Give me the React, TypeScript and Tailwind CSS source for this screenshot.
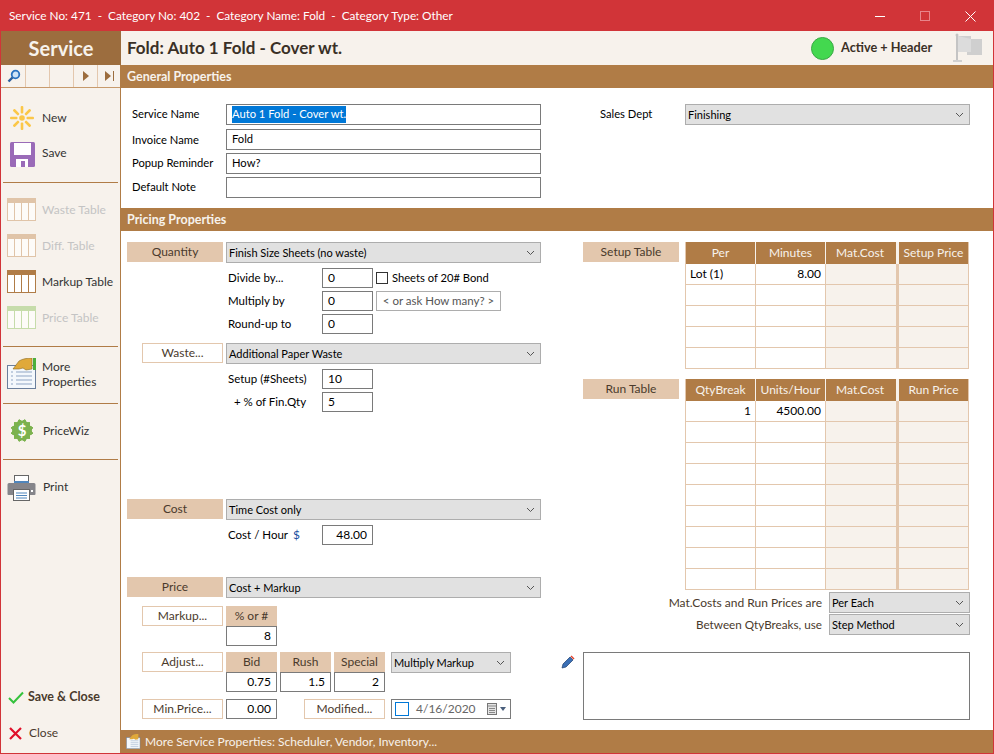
import React from "react";

const font = { fontFamily: 'Lato, sans-serif' };

function Chevron({ className = "" }: { className?: string }) {
  return (
    <svg width="9" height="6" viewBox="0 0 9 6" className={className}>
      <path d="M1 1l3.500 3.500L8 1" fill="none" stroke="#555" strokeWidth="1" />
    </svg>
  );
}

function Select({ text, className = "" }: { text: string; className?: string }) {
  return (
    <div className={`h-[21px] shrink-0 flex items-center justify-between bg-[#e1e1e1] border border-[#adadad] pl-[2px] pr-[5px] text-[11px] text-black ${className}`}>
      <span className="pt-[2px]">{text}</span>
      <Chevron />
    </div>
  );
}

function Box({ text = "", right = false, className = "" }: { text?: string; right?: boolean; className?: string }) {
  return (
    <div className={`h-[20px] shrink-0 flex items-center border border-[#7a7a7a] bg-white text-[12px] text-black px-[5px] ${right ? "justify-end" : ""} ${className}`}>
      {text}
    </div>
  );
}

function Tag({ text, className = "" }: { text: string; className?: string }) {
  return (
    <div className={`h-[20px] shrink-0 flex items-center justify-center bg-[#e3c7ad] text-[#4a3a2c] text-[12px] ${className}`}>{text}</div>
  );
}

function Btn({ text, className = "" }: { text: string; className?: string }) {
  return (
    <div className={`h-[20px] shrink-0 flex items-center justify-center border border-[#e3c7ad] bg-white text-[#4a3a2c] text-[12px] ${className}`}>{text}</div>
  );
}

function Band({ text }: { text: string }) {
  return (
    <div className="h-[23px] shrink-0 bg-[#b07c46] flex items-center pl-[6px] pt-[2px] text-[12.500px] font-bold text-[#f7f2ec]">{text}</div>
  );
}

function GridIcon({ head, line, fill }: { head: string; line: string; fill: string }) {
  return (
    <svg width="29" height="23" viewBox="0 0 29 23" className="shrink-0">
      <rect x="0.500" y="0.500" width="28" height="22" fill={fill} stroke={line} />
      <rect x="0" y="0" width="29" height="5" fill={head} />
      <path d="M7.500 5v18M14.500 5v18M21.500 5v18" stroke={line} strokeWidth="1" />
    </svg>
  );
}

function TableItem({ text, head, line, fill, color, className = "" }: { text: string; head: string; line: string; fill: string; color: string; className?: string }) {
  return (
    <div className={`flex items-center h-[23px] pl-[6px] ${className}`}>
      <GridIcon head={head} line={line} fill={fill} />
      <span className={`ml-[6px] text-[12px] whitespace-nowrap ${color}`}>{text}</span>
    </div>
  );
}

function Divider({ className = "" }: { className?: string }) {
  return <div className={`h-px mx-[2px] shrink-0 bg-[#b07c46] ${className}`} />;
}

function SunIcon() {
  const rays = [0, 45, 90, 135, 180, 225, 270, 315];
  return (
    <svg width="26" height="26" viewBox="0 0 26 26" className="shrink-0">
      {rays.map((r) => (
        <rect key={r} x="11.700" y="1" width="2.600" height="7.500" rx="1" fill="#fbc748" transform={`rotate(${r} 13 13)`} />
      ))}
      <circle cx="13" cy="13" r="2.800" fill="#fbc748" />
    </svg>
  );
}

function SaveIcon() {
  return (
    <svg width="25" height="25" viewBox="0 0 25 25" className="shrink-0">
      <rect x="0" y="0" width="25" height="25" rx="1.500" fill="#9a6bb8" />
      <rect x="4" y="1" width="17" height="12" fill="#fff" />
      <rect x="6" y="17" width="12" height="8" fill="#fff" />
      <rect x="11" y="19" width="4" height="6" fill="#9a6bb8" />
    </svg>
  );
}

function MoreIcon() {
  return (
    <svg width="30" height="31" viewBox="0 0 30 31" className="shrink-0">
      <rect x="0.500" y="7.500" width="28" height="23" fill="#f4f8fc" stroke="#6b7f9c" />
      <path d="M4 14h2M4 18h2M4 22h2M4 26h2M9 14h16M9 18h16M9 22h16M9 26h16" stroke="#8fa5c4" />
      <path d="M6 11L12 3c3-2 8-3 13-3v11l-6 1-3-2-4 1z" fill="#e0a93a" stroke="#8a6a20" strokeWidth="0.600" />
      <rect x="26" y="0" width="3" height="12" fill="#4caf3c" />
    </svg>
  );
}

function WizIcon() {
  const n = Array.from({ length: 12 }, (_, i) => i * 30);
  return (
    <svg width="26" height="27" viewBox="0 0 26 27" className="shrink-0">
      {n.map((r) => (
        <rect key={r} x="5" y="5.500" width="16" height="16" fill="#7cb24f" transform={`rotate(${r} 13 13.500)`} />
      ))}
      <circle cx="13" cy="13.500" r="8" fill="#7cb24f" />
      <text x="13" y="19" textAnchor="middle" fontSize="15" fontWeight="700" fill="#fff" style={font}>$</text>
    </svg>
  );
}

function PrintIcon() {
  return (
    <svg width="29" height="26" viewBox="0 0 29 26" className="shrink-0">
      <rect x="7.500" y="0.500" width="14" height="9" fill="#fff" stroke="#666" />
      <rect x="7" y="6" width="15" height="3" fill="#4f86bd" />
      <path d="M2 8h25a1.500 1.500 0 0 1 1.500 1.500V19a1 1 0 0 1-1 1H23v-5H6v5H1.500a1 1 0 0 1-1-1V9.500A1.500 1.500 0 0 1 2 8z" fill="#85858a" />
      <rect x="6.500" y="14.500" width="16" height="11" fill="#fff" stroke="#666" />
      <path d="M9 18h11M9 20.500h11M9 23h11" stroke="#4f86bd" />
      <rect x="24" y="15" width="2" height="2" fill="#fff" />
    </svg>
  );
}

function TableGrid({ headers, rows, data, firstRight }: { headers: string[]; rows: number; data: [string, string]; firstRight?: boolean }) {
  return (
    <div className="w-[284px] border-x border-[#e3c7ad] shrink-0">
      <div className="h-[22px] flex bg-[#b07c46] text-[#f7f2ec] text-[12px]">
        <div className="w-[70px] flex items-center justify-center border-r border-[#f7f2ec]">{headers[0]}</div>
        <div className="w-[70px] flex items-center justify-center border-r border-[#f7f2ec]">{headers[1]}</div>
        <div className="w-[73px] pr-[2px] flex items-center justify-center border-r-[3px] border-[#f7f2ec]">{headers[2]}</div>
        <div className="flex-1 flex items-center justify-center whitespace-nowrap">{headers[3]}</div>
      </div>
      {Array.from({ length: rows }, (_, i) => (
        <div key={i} className="h-[21px] flex text-[12px] text-black border-b border-[#e3c7ad]">
          <div className={`w-[70px] flex items-center px-[4px] border-r border-[#e3c7ad] bg-white ${firstRight ? "justify-end" : ""}`}>{i === 0 ? data[0] : ""}</div>
          <div className="w-[70px] flex items-center justify-end px-[4px] border-r border-[#e3c7ad] bg-white">{i === 0 ? data[1] : ""}</div>
          <div className="w-[73px] border-r-[3px] border-[#e3c7ad] bg-[#f7f2ec]" />
          <div className="flex-1 bg-[#f7f2ec]" />
        </div>
      ))}
    </div>
  );
}

function SubRow({ label, value, className = "", children }: { label: string; value: string; className?: string; children?: React.ReactNode }) {
  return (
    <div className={`flex items-center h-[20px] pl-[101px] ${className}`}>
      <span className="w-[94px] text-[11.500px] text-black whitespace-pre">{label}</span>
      <Box text={value} className="w-[51px]" />
      {children}
    </div>
  );
}

export default function App() {
  return (
    <div style={font} className="w-[994px] h-[754px] flex flex-col overflow-hidden bg-white border border-[#d13438]">
      {/* title bar */}
      <div className="h-[30px] shrink-0 bg-[#d13438] flex items-center pl-[8px] text-white text-[11.800px]">
        <span className="whitespace-pre">{"Service No: 471  -  Category No: 402  -  Category Name: Fold  -  Category Type: Other"}</span>
        <div className="ml-auto flex items-center">
          <div className="w-[10px] h-px bg-white mr-[35px]" />
          <div className="w-[10px] h-[10px] border border-[#e8848a] mr-[35px]" />
          <svg width="11" height="11" viewBox="0 0 11 11" className="mr-[17px]"><path d="M.5.5l10 10M10.500.5l-10 10" stroke="#fff" /></svg>
        </div>
      </div>

      <div className="flex-1 flex min-h-0">
        {/* sidebar */}
        <div className="w-[120px] shrink-0 bg-[#f7f2ec] border-r border-[#b07c46] flex flex-col">
          <div className="h-[34px] shrink-0 bg-[#9c6d3e] -mr-px flex items-center justify-center text-[#f7f2ec] text-[20px] font-bold">Service</div>
          <div className="h-[23px] shrink-0 flex pl-px border-b border-[#c79a6c]">
            <div className="w-[24px] flex items-center justify-center border-r border-[#e3c7ad]">
              <svg width="14" height="14" viewBox="0 0 14 14"><circle cx="8.500" cy="5.500" r="3.800" fill="#cfe4f7" stroke="#2a72c0" strokeWidth="1.800" /><path d="M5.500 8.500L1.500 12.500" stroke="#2a5f9c" strokeWidth="2.400" /></svg>
            </div>
            <div className="w-[24px] border-r border-[#e3c7ad]" />
            <div className="w-[24px] border-r border-[#e3c7ad]" />
            <div className="w-[24px] flex items-center justify-center border-r border-[#e3c7ad]">
              <svg width="6" height="10" viewBox="0 0 6 10"><path d="M0 0l6 5-6 5z" fill="#9c6d3e" /></svg>
            </div>
            <div className="flex-1 flex items-center justify-center">
              <svg width="9" height="10" viewBox="0 0 9 10"><path d="M0 0l6 5-6 5z" fill="#9c6d3e" /><rect x="8" width="1" height="10" fill="#9c6d3e" /></svg>
            </div>
          </div>

          <div className="flex items-center h-[26px] mt-[17px] pl-[8px]">
            <SunIcon />
            <span className="ml-[7px] -mt-px text-[12px] text-[#333]">New</span>
          </div>
          <div className="flex items-center h-[25px] mt-[11px] pl-[9px]">
            <SaveIcon />
            <span className="ml-[7px] -mt-[3px] text-[12px] text-[#333]">Save</span>
          </div>
          <Divider className="mt-[15px]" />

          <TableItem className="mt-[15px]" text="Waste Table" head="#e0c4a8" line="#e0c4a8" fill="#fdfbf8" color="text-[#c4c4c4]" />
          <TableItem className="mt-[13px]" text="Diff. Table" head="#e0c4a8" line="#e0c4a8" fill="#fdfbf8" color="text-[#c4c4c4]" />
          <TableItem className="mt-[13px]" text="Markup Table" head="#b07c46" line="#b07c46" fill="#ffffff" color="text-[#333]" />
          <TableItem className="mt-[13px]" text="Price Table" head="#c6dcaa" line="#c6dcaa" fill="#fdfbf8" color="text-[#c4c4c4]" />
          <Divider className="mt-[17px]" />

          <div className="flex items-center h-[31px] mt-[11px] pl-[6px]">
            <MoreIcon />
            <span className="ml-[5px] text-[12px] leading-[15px] text-[#333]">More<br />Properties</span>
          </div>
          <Divider className="mt-[14px]" />

          <div className="flex items-center h-[27px] mt-[13px] pl-[8px]">
            <WizIcon />
            <span className="ml-[8px] text-[12px] text-[#333]">PriceWiz</span>
          </div>
          <Divider className="mt-[15px]" />

          <div className="flex items-center h-[26px] mt-[15px] pl-[6px]">
            <PrintIcon />
            <span className="ml-[7px] -mt-[3px] text-[12px] text-[#333]">Print</span>
          </div>

          <div className="mt-auto flex items-center h-[20px] pl-[7px]">
            <svg width="16" height="13" viewBox="0 0 16 13"><path d="M1 7l4.500 4.500L15 1.500" fill="none" stroke="#35c23c" strokeWidth="2" /></svg>
            <span className="ml-[4px] text-[12.500px] font-bold text-[#4a3a2c]">Save &amp; Close</span>
          </div>
          <div className="flex items-center h-[20px] mt-[16px] mb-[10px] pl-[8px]">
            <svg width="13" height="13" viewBox="0 0 13 13"><path d="M1 1l11 11M12 1L1 12" stroke="#e0102a" strokeWidth="2.200" /></svg>
            <span className="ml-[7px] text-[12px] text-[#4a3a2c]">Close</span>
          </div>
        </div>

        {/* main */}
        <div className="flex-1 flex flex-col min-w-0">
          <div className="h-[34px] shrink-0 bg-[#f7f2ec] flex items-center pl-[6px] pr-[10px]">
            <span className="text-[17px] font-bold text-[#3a3026]">Fold: Auto 1 Fold - Cover wt.</span>
            <div className="ml-auto w-[23px] h-[23px] rounded-full bg-[#43d84f] border border-[#3aa845]" />
            <span className="ml-[7px] w-[92px] whitespace-nowrap text-[12.700px] font-bold text-[#3a3026]">Active + Header</span>
            <svg width="30" height="32" viewBox="0 0 30 32" className="ml-[20px]">
              <rect x="3" y="2" width="2" height="26" fill="#c4c4c4" />
              <rect x="0" y="28" width="9" height="2" fill="#d0d0d0" />
              <circle cx="4" cy="3" r="1.500" fill="#c4c4c4" />
              <path d="M5 4h13v3h11v16H14v-3H5z" fill="#cfcfcf" />
              <path d="M5 4l13 3v13H5z" fill="#dcdcdc" />
            </svg>
          </div>

          <Band text="General Properties" />
          <div className="h-[120px] shrink-0 flex pl-[11px] pt-[16px]">
            <div className="w-[409px] text-[11.200px] text-black">
              {[
                ["Service Name", "Auto 1 Fold - Cover wt.", true],
                ["Invoice Name", "Fold", false],
                ["Popup Reminder", "How?", false],
                ["Default Note", "", false],
              ].map(([label, val, sel], i) => (
                <div key={i} className={`flex items-center h-[21px] ${i === 0 ? "" : i === 1 ? "mt-[4px]" : "mt-[3px]"}`}>
                  <span className={`w-[94px] whitespace-nowrap ${i === 1 ? "pt-px" : "-mt-px"}`}>{label as string}</span>
                  <div className="w-[315px] h-[21px] border border-[#7a7a7a] bg-white flex items-center px-[5px]">
                    {sel ? <span className="bg-[#0078d7] text-white">{val as string}</span> : (val as string)}
                  </div>
                </div>
              ))}
            </div>
            <div className="ml-[59px] h-[21px] flex items-center text-[11.200px] text-black">
              <span className="w-[85px]">Sales Dept</span>
              <Select text="Finishing" className="w-[285px]" />
            </div>
          </div>

          <Band text="Pricing Properties" />
          <div className="flex-1 flex pl-[6px] pt-[11px] min-h-0">
            {/* left */}
            <div className="w-[414px] shrink-0 flex flex-col">
              <div className="flex gap-[3px]">
                <Tag text="Quantity" className="w-[96px]" />
                <Select text="Finish Size Sheets (no waste)" className="w-[315px]" />
              </div>
              <SubRow className="mt-[5px]" label="Divide by..." value="0">
                <div className="ml-[3px] w-[12px] h-[12px] border border-[#333] bg-white" />
                <span className="ml-[4px] text-[11.200px] text-black">Sheets of 20# Bond</span>
              </SubRow>
              <SubRow className="mt-[3px]" label="Multiply by" value="0">
                <div className="ml-[3px] w-[125px] h-[20px] border border-[#adadad] flex items-center justify-center text-[11.500px] text-[#555]">{"< or ask How many? >"}</div>
              </SubRow>
              <SubRow className="mt-[3px]" label="Round-up to" value="0" />
              <div className="flex gap-[3px] mt-[9px]">
                <Btn text="Waste..." className="w-[81px] ml-[15px]" />
                <Select text="Additional Paper Waste" className="w-[315px]" />
              </div>
              <SubRow className="mt-[5px]" label="Setup (#Sheets)" value="10" />
              <SubRow className="mt-[3px]" label="  + % of Fin.Qty" value="5" />

              <div className="flex gap-[3px] mt-[87px]">
                <Tag text="Cost" className="w-[96px]" />
                <Select text="Time Cost only" className="w-[315px]" />
              </div>
              <div className="flex items-center h-[20px] pl-[101px] mt-[5px]">
                <span className="w-[65px] text-[11.500px] text-black">Cost / Hour</span>
                <span className="w-[29px] text-[12px] text-[#1a4fa0]">$</span>
                <Box text="48.00" right className="w-[51px]" />
              </div>

              <div className="flex gap-[3px] mt-[32px]">
                <Tag text="Price" className="w-[96px]" />
                <Select text="Cost + Markup" className="w-[315px]" />
              </div>
              <div className="flex gap-[3px] mt-[8px]">
                <Btn text="Markup..." className="w-[81px] ml-[15px]" />
                <div className="w-[51px] shrink-0">
                  <Tag text="% or #" />
                  <Box text="8" right />
                </div>
              </div>
              <div className="flex gap-[3px] mt-[6px]">
                <Btn text="Adjust..." className="w-[81px] ml-[15px]" />
                <div className="w-[51px] shrink-0">
                  <Tag text="Bid" />
                  <Box text="0.75" right />
                </div>
                <div className="w-[51px] shrink-0">
                  <Tag text="Rush" />
                  <Box text="1.5" right />
                </div>
                <div className="w-[51px] shrink-0">
                  <Tag text="Special" />
                  <Box text="2" right />
                </div>
                <Select text="Multiply Markup" className="w-[120px] ml-[3px]" />
                <svg width="14" height="14" viewBox="0 0 14 14" className="ml-[47px] mt-[3px] shrink-0">
                  <path d="M1 13l1-4 7-7 3 3-7 7z" fill="#3a6fb5" stroke="#1e3f6e" strokeWidth="0.700" />
                  <path d="M9.500 1.500l1-1 3 3-1 1z" fill="#e0402a" />
                </svg>
              </div>
              <div className="flex mt-[7px]">
                <Btn text="Min.Price..." className="w-[81px] ml-[15px]" />
                <Box text="0.00" right className="w-[51px] ml-[3px]" />
                <Btn text="Modified..." className="w-[81px] ml-[27px]" />
                <div className="w-[120px] h-[20px] ml-[6px] border border-[#7a7a7a] flex items-center pl-[3px] pr-[3px] text-[12px] text-[#666]">
                  <div className="w-[14px] h-[14px] border border-[#0078d7]" />
                  <span className="ml-[7px]">4/16/2020</span>
                  <svg width="20" height="12" viewBox="0 0 20 12" className="ml-auto">
                    <rect x="0.500" y="0.500" width="9" height="11" fill="#e4e4e4" stroke="#777" />
                    <path d="M1 3h8M2 5.500h6M2 7.500h6M2 9.500h6" stroke="#888" />
                    <path d="M13 4h6l-3 4z" fill="#4a5f7c" />
                  </svg>
                </div>
              </div>
            </div>

            {/* right */}
            <div className="ml-[42px] w-[387px] flex flex-col">
              <div className="flex gap-[6px]">
                <Tag text="Setup Table" className="w-[96px]" />
                <TableGrid headers={["Per", "Minutes", "Mat.Cost", "Setup Price"]} rows={5} data={["Lot (1)", "8.00"]} />
              </div>
              <div className="flex gap-[6px] mt-[10px]">
                <Tag text="Run Table" className="w-[96px]" />
                <TableGrid headers={["QtyBreak", "Units/Hour", "Mat.Cost", "Run Price"]} rows={9} data={["1", "4500.00"]} firstRight />
              </div>
              <div className="flex items-center justify-end mt-[2px] h-[21px]">
                <span className="text-[12px] text-[#4a3a2c] mr-[7px]">Mat.Costs and Run Prices are</span>
                <Select text="Per Each" className="w-[141px]" />
              </div>
              <div className="flex items-center justify-end mt-px h-[21px]">
                <span className="text-[11.700px] text-[#4a3a2c] mr-[7px]">Between QtyBreaks, use</span>
                <Select text="Step Method" className="w-[141px]" />
              </div>
              <div className="mt-[17px] h-[68px] border border-[#7a7a7a] bg-white" />
            </div>
          </div>

          <div className="h-[23px] shrink-0 bg-[#b07c46] flex items-center pl-[5px] text-[12px] text-[#f7f2ec]">
            <svg width="15" height="15" viewBox="0 0 30 31" className="shrink-0">
              <rect x="0.500" y="7.500" width="28" height="23" fill="#f4f8fc" stroke="#6b7f9c" />
              <path d="M9 14h16M9 18h16M9 22h16M9 26h16" stroke="#8fa5c4" />
              <path d="M6 11L12 3c3-2 8-3 13-3v11l-6 1-3-2-4 1z" fill="#e0a93a" />
            </svg>
            <span className="ml-[4px]">More Service Properties: Scheduler, Vendor, Inventory...</span>
          </div>
        </div>
      </div>
    </div>
  );
}
